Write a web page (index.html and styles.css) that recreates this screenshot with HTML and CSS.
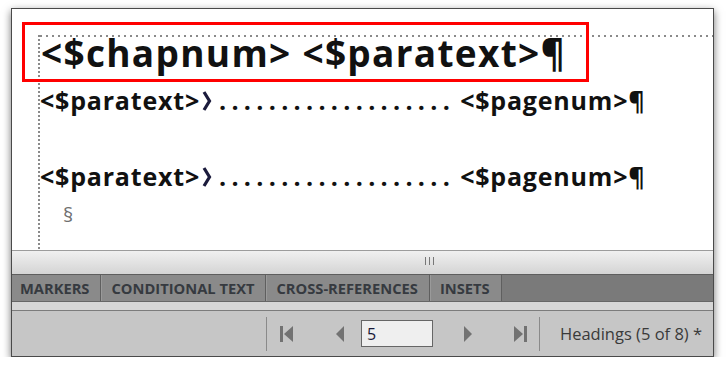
FILE: index.html
```html
<!DOCTYPE html>
<html lang="en">
<head>
    <meta charset="UTF-8">
    <title>Reference Page - Headings</title>
    <link rel="stylesheet" href="styles.css">
</head>
<body>
    <div class="window">
        <div class="doc">
            <div class="frame">
                <p class="heading">&lt;$chapnum&gt; &lt;$paratext&gt;&para;</p>
                <p class="toc-line">&lt;$paratext&gt;<svg class="tab-mark" width="10" height="20" viewBox="0 0 10 20"><path d="M2 1 L7.5 10 L2 19" /></svg><span class="leader">...................</span>&lt;$pagenum&gt;&para;</p>
                <p class="toc-line second">&lt;$paratext&gt;<svg class="tab-mark" width="10" height="20" viewBox="0 0 10 20"><path d="M2 1 L7.5 10 L2 19" /></svg><span class="leader">...................</span>&lt;$pagenum&gt;&para;</p>
                <p class="end-mark">&sect;</p>
            </div>
            <!-- annotation box drawn over the page -->
            <div class="highlight"></div>
        </div>

        <div class="splitter"><span class="grip"></span></div>

        <div class="tabs">
            <span class="tab">MARKERS</span>
            <span class="tab">CONDITIONAL TEXT</span>
            <span class="tab">CROSS-REFERENCES</span>
            <span class="tab">INSETS</span>
        </div>

        <div class="strip"></div>

        <div class="toolbar">
            <span class="sep"></span>
            <svg class="nav first" width="13" height="16" viewBox="0 0 13 16"><rect x="0" y="0" width="3" height="16" /><polygon points="13,0 13,16 4,8" /></svg>
            <svg class="nav prev" width="8" height="16" viewBox="0 0 8 16"><polygon points="8,0 8,16 0,8" /></svg>
            <input type="text" class="page-box" value="5">
            <svg class="nav next" width="8" height="16" viewBox="0 0 8 16"><polygon points="0,0 0,16 8,8" /></svg>
            <svg class="nav last" width="13" height="16" viewBox="0 0 13 16"><polygon points="0,0 0,16 9,8" /><rect x="10" y="0" width="3" height="16" /></svg>
            <span class="sep right"></span>
            <span class="status">Headings (5 of 8) *</span>
        </div>
    </div>
</body>
</html>
```

FILE: styles.css
```css
* {
    box-sizing: border-box;
}

body {
    margin: 0;
    padding: 8px 0 0 11px;
    background: #fff;
    font-family: "Open Sans", sans-serif;
}

.window {
    width: 703px;
    height: 349px;
    border: 1px solid #4a4a4a;
    display: flex;
    flex-direction: column;
    background: #c6c6c6;
    box-shadow: 0 3px 8px rgba(0, 0, 0, 0.55);
}

/* page area */
.doc {
    position: relative;
    height: 241px;
    background: #fff;
    padding: 26px 0 0 26px;
    display: flex;
    flex-direction: column;
}

/* text frame with its dotted top and left edges */
.frame {
    flex: 1;
    padding-left: 2px;
    background-image:
        linear-gradient(to right, #8a8a8a 2px, transparent 2px),
        linear-gradient(to bottom, #8a8a8a 2px, transparent 2px);
    background-size: 6px 2px, 2px 4px;
    background-repeat: repeat-x, repeat-y;
    background-position: 2px 0, 0 0;
}

.frame p {
    margin: 0;
    color: #111;
    font-weight: 700;
    white-space: nowrap;
}

.heading {
    font-size: 37px;
    line-height: 35px;
    letter-spacing: 1.3px;
    padding-left: 1px;
}

.toc-line {
    display: flex;
    align-items: center;
    font-size: 25px;
    line-height: 25px;
    letter-spacing: 0.8px;
}

.frame .toc-line {
    margin-top: 18px;
}

.frame .toc-line.second {
    margin-top: 51px;
}

.tab-mark {
    margin: 0 7px 0 2px;
}

.tab-mark path {
    fill: none;
    stroke: #1b1b3c;
    stroke-width: 3.2;
}

.leader {
    letter-spacing: 5.3px;
    margin-right: 5px;
}

.frame .end-mark {
    font-weight: 400;
    font-size: 20px;
    line-height: 20px;
    color: #6f6f6f;
    margin: 16px 0 0 23px;
}

.highlight {
    position: absolute;
    left: 10px;
    top: 13px;
    width: 567px;
    height: 60px;
    border: 3px solid #f00;
}

/* splitter between page and panel */
.splitter {
    height: 25px;
    border-top: 1px solid #9c9c9c;
    border-bottom: 1px solid #5e5e5e;
    background: linear-gradient(#f0f0f0, #d4d4d4);
    padding: 6px 0 0 413px;
}

.grip {
    display: block;
    width: 10px;
    height: 8px;
    background: linear-gradient(to right, #777 1px, transparent 1px);
    background-size: 4px 8px;
}

/* panel tabs */
.tabs {
    height: 27px;
    display: flex;
    background: #7a7a7a;
    border-bottom: 1px solid #666;
}

.tab {
    display: flex;
    align-items: center;
    padding: 0 11px 0 9px;
    background: #8a8a8a;
    border-right: 1px solid #5f5f5f;
    border-left: 1px solid #9a9a9a;
    font-size: 14.7px;
    font-weight: 700;
    color: #363a40;
}

.tab:first-child {
    border-left: none;
    padding-left: 8px;
}

.strip {
    height: 9px;
    background: #d6d6d6;
    border-bottom: 1px solid #7c7c7c;
}

/* navigation bar */
.toolbar {
    flex: 1;
    display: flex;
    align-items: center;
    padding-left: 254px;
}

.sep {
    width: 1px;
    height: 34px;
    background: #8a8a8a;
}

.nav {
    fill: #727272;
}

.first {
    margin-left: 13px;
}

.prev {
    margin-left: 43px;
}

.page-box {
    margin-left: 17px;
    width: 72px;
    height: 27px;
    border: 1px solid #666;
    background: #efefef;
    font-family: "Open Sans", sans-serif;
    font-size: 16px;
    color: #1a1a3a;
    padding: 0 5px;
}

.next {
    margin-left: 31px;
}

.last {
    margin-left: 42px;
}

.sep.right {
    margin-left: 12px;
}

.status {
    margin-left: 20px;
    font-size: 16.5px;
    color: #3a3a3a;
}
```
